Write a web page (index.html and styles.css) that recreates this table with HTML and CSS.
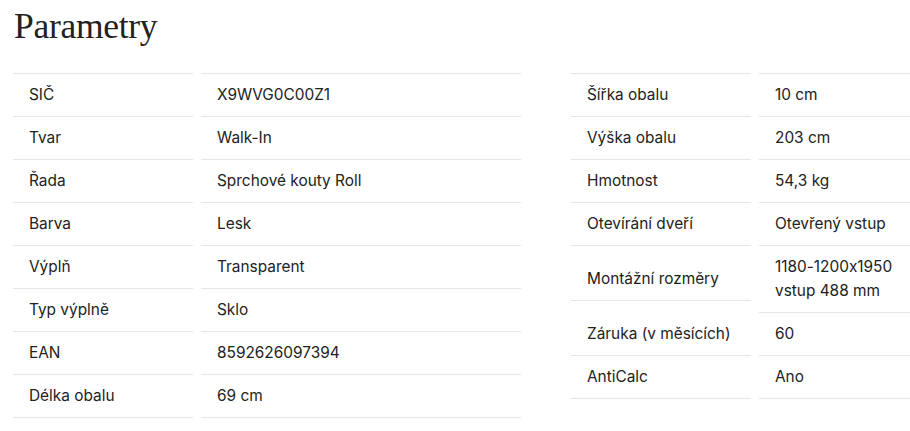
FILE: index.html
```html
<!DOCTYPE html>
<html lang="cs">
<head>
<meta charset="utf-8">
<title>Parametry</title>
<link rel="stylesheet" href="styles.css">
</head>
<body>
<section class="params">
  <h2 class="params-title">Parametry</h2>
  <div class="params-grid">
    <dl class="spec">
      <dt class="spec-label">SIČ</dt><dd class="spec-value">X9WVG0C00Z1</dd>
      <dt class="spec-label">Tvar</dt><dd class="spec-value">Walk-In</dd>
      <dt class="spec-label">Řada</dt><dd class="spec-value">Sprchové kouty Roll</dd>
      <dt class="spec-label">Barva</dt><dd class="spec-value">Lesk</dd>
      <dt class="spec-label">Výplň</dt><dd class="spec-value">Transparent</dd>
      <dt class="spec-label">Typ výplně</dt><dd class="spec-value">Sklo</dd>
      <dt class="spec-label">EAN</dt><dd class="spec-value">8592626097394</dd>
      <dt class="spec-label">Délka obalu</dt><dd class="spec-value">69 cm</dd>
    </dl>
    <dl class="spec">
      <dt class="spec-label">Šířka obalu</dt><dd class="spec-value">10 cm</dd>
      <dt class="spec-label">Výška obalu</dt><dd class="spec-value">203 cm</dd>
      <dt class="spec-label">Hmotnost</dt><dd class="spec-value">54,3 kg</dd>
      <dt class="spec-label">Otevírání dveří</dt><dd class="spec-value">Otevřený vstup</dd>
      <dt class="spec-label spec-label--short">Montážní rozměry</dt><dd class="spec-value"><span class="nowrap">1180-1200x1950</span> vstup 488 mm</dd>
      <dt class="spec-label spec-label--pulled">Záruka (v měsících)</dt><dd class="spec-value">60</dd>
      <dt class="spec-label">AntiCalc</dt><dd class="spec-value">Ano</dd>
    </dl>
  </div>
</section>
</body>
</html>
```

FILE: styles.css
```css
html, body {
  margin: 0;
  padding: 0;
  background: #ffffff;
  overflow: hidden;
}

body {
  font-family: Inter, "Noto Sans", "Liberation Sans", sans-serif;
  font-feature-settings: "calt" 0;
  color: #222222;
}

.params {
  padding: 6px 0 0 13px;
}

.params-title {
  margin: 0 0 26px 1px;
  font-family: "Liberation Serif", "DejaVu Serif", serif;
  font-weight: 400;
  font-size: 35.5px;
  line-height: 41px;
  letter-spacing: -0.3px;
  color: #222222;
}

.params-grid {
  display: grid;
  grid-template-columns: 508px 339px;
  column-gap: 50px;
  align-items: start;
}

.spec {
  margin: 0;
  display: grid;
  grid-template-columns: 180px 1fr;
  column-gap: 8px;
}

.spec-label,
.spec-value {
  margin: 0;
  padding: 9px 16px;
  border-top: 1px solid #e6e6e6;
  font-size: 15.4px;
  line-height: 24px;
  display: flex;
  align-items: center;
}

.spec-value {
  display: block;
}

.spec-label:nth-last-of-type(1),
.spec-value:nth-last-of-type(1) {
  border-bottom: 1px solid #e6e6e6;
}

.spec-label--short,
.spec-label--pulled {
  align-items: flex-start;
  padding-top: 21px;
  box-sizing: border-box;
}

.spec-label--short {
  align-self: start;
  height: 55px;
}

.spec-label--pulled {
  margin-top: -12px;
}

.nowrap {
  white-space: nowrap;
}
```
